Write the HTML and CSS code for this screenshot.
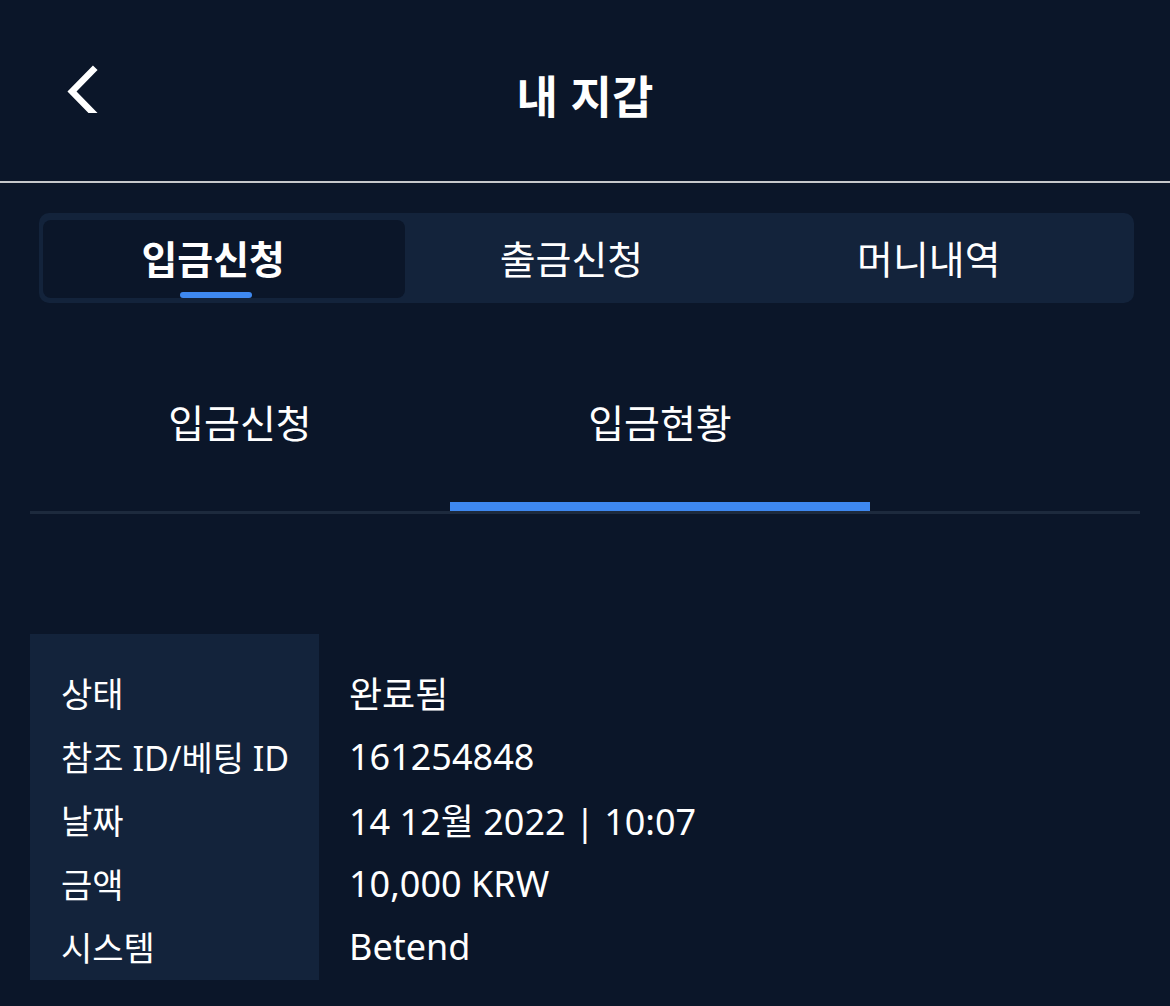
FILE: index.html
```html
<!DOCTYPE html>
<html lang="ko">
<head>
<meta charset="utf-8">
<title>내 지갑</title>
<link rel="stylesheet" href="styles.css">
</head>
<body>
<header class="topbar">
  <div class="back">
    <svg width="40" height="60" viewBox="0 0 40 60" aria-hidden="true">
      <polyline points="31,17 10,38.5 31,60" fill="none" stroke="#ffffff" stroke-width="6.5" stroke-linecap="square" stroke-linejoin="miter"/>
    </svg>
  </div>
  <h1 class="title">내 지갑</h1>
  <div class="spacer"></div>
</header>
<main class="content">
  <nav class="tabbar">
    <div class="tab tab-active"><span>입금신청</span><i class="tab-indicator"></i></div>
    <div class="tab tab-mid"><span>출금신청</span></div>
    <div class="tab tab-last"><span>머니내역</span></div>
  </nav>
  <nav class="subtabs">
    <div class="subtab">입금신청</div>
    <div class="subtab subtab-active">입금현황</div>
  </nav>
  <section class="details">
    <div class="labels">
      <div class="row">상태</div>
      <div class="row">참조 ID/베팅 ID</div>
      <div class="row">날짜</div>
      <div class="row">금액</div>
      <div class="row">시스템</div>
    </div>
    <div class="values">
      <div class="row">완료됨</div>
      <div class="row">161254848</div>
      <div class="row">14 12월 2022 | 10:07</div>
      <div class="row">10,000 KRW</div>
      <div class="row">Betend</div>
    </div>
  </section>
</main>
</body>
</html>
```
FILE: styles.css
```css
* { box-sizing: border-box; }
html, body {
  margin: 0;
  padding: 0;
  background: #0b1629;
  color: #ffffff;
  font-family: "Noto Sans", "Noto Sans CJK KR", sans-serif;
}
.topbar {
  height: 183px;
  border-bottom: 2px solid #c6c8cb;
  display: grid;
  grid-template-columns: 1fr auto 1fr;
  align-items: center;
}
.back {
  padding-left: 62px;
  height: 60px;
  margin-top: -16px;
}
.back svg { display: block; }
.title {
  margin: 8px 0 0 0;
  font-family: "Noto Sans CJK KR", sans-serif;
  font-size: 45px;
  font-weight: 700;
  line-height: 1;
}
.content {
  padding: 30px 30px 0 30px;
}
.tabbar {
  margin: 0 6px 0 9px;
  height: 90px;
  background: #13233b;
  border-radius: 10px;
  padding: 7px 4px 5px 4px;
  display: grid;
  grid-template-columns: repeat(3, 1fr);
}
.tab {
  position: relative;
  display: flex;
  align-items: center;
  justify-content: center;
  padding-right: 22px;
  padding-bottom: 4px;
  border-radius: 8px;
  font-family: "Noto Sans CJK KR", sans-serif;
  font-size: 39px;
  font-weight: 400;
}
.tab-mid { padding-right: 30px; }
.tab-last { padding-right: 40px; }
.tab-active {
  background: #0b1629;
  font-weight: 700;
}
.tab-indicator {
  position: absolute;
  bottom: 0;
  left: 137px;
  width: 72px;
  height: 6px;
  border-radius: 3px;
  background: #3e88f0;
}
.subtabs {
  display: flex;
  border-bottom: 3px solid #1d2a3d;
}
.subtab {
  width: 420px;
  height: 208px;
  padding-top: 93px;
  line-height: 50px;
  text-align: center;
  font-family: "Noto Sans CJK KR", sans-serif;
  font-size: 39px;
}
.subtab-active {
  box-shadow: inset 0 -9px 0 #3e88f0;
}
.details {
  margin-top: 120px;
  display: flex;
}
.labels {
  width: 289px;
  background: #13233b;
  padding: 27px 0 1px 31px;
  font-size: 34px;
}
.values {
  padding: 27px 0 1px 30px;
  font-size: 36px;
}
.row {
  height: 63.5px;
  display: flex;
  align-items: center;
  white-space: nowrap;
}
```
